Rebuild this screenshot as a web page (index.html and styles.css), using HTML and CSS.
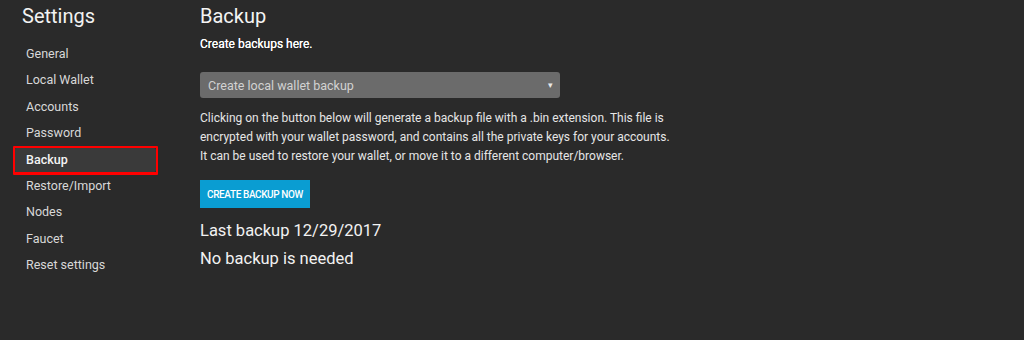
FILE: index.html
```html
<!DOCTYPE html>
<html>
<head>
<meta charset="utf-8">
<link rel="stylesheet" href="styles.css">
</head>
<body>
<div class="app">
  <aside class="sidebar">
    <h1 class="side-title">Settings</h1>
    <nav class="nav">
      <a class="nav-item">General</a>
      <a class="nav-item">Local Wallet</a>
      <a class="nav-item">Accounts</a>
      <a class="nav-item">Password</a>
      <a class="nav-item active">Backup<span class="mark"></span></a>
      <a class="nav-item">Restore/Import</a>
      <a class="nav-item">Nodes</a>
      <a class="nav-item">Faucet</a>
      <a class="nav-item">Reset settings</a>
    </nav>
  </aside>
  <main class="main">
    <h2 class="title">Backup</h2>
    <p class="sub">Create backups here.</p>
    <div class="select">
      <span>Create local wallet backup</span>
      <span class="arrow">▾</span>
    </div>
    <p class="desc">Clicking on the button below will generate a backup file with a .bin extension. This file is encrypted with your wallet password, and contains all the private keys for your accounts. It can be used to restore your wallet, or move it to a different computer/browser.</p>
    <button class="btn">CREATE BACKUP NOW</button>
    <div class="status status-first">Last backup 12/29/2017</div>
    <div class="status">No backup is needed</div>
  </main>
</div>
</body>
</html>
```
FILE: styles.css
```css
html, body {
  margin: 0;
  padding: 0;
  background: #2a2a2a;
  height: 340px;
  overflow: hidden;
}
body {
  font-family: Roboto, "Liberation Sans", sans-serif;
  color: #ececec;
}
.app {
  display: flex;
  height: 340px;
}
.sidebar {
  width: 186px;
  padding-left: 14px;
  flex-shrink: 0;
}
.side-title {
  margin: 0;
  padding: 4px 0 0 8px;
  font-size: 20px;
  font-weight: 400;
  line-height: 24px;
  color: #f2f2f2;
}
.nav {
  display: flex;
  flex-direction: column;
  margin-top: 14px;
  width: 142px;
}
.nav-item {
  position: relative;
  display: block;
  height: 24px;
  line-height: 24px;
  margin-bottom: 2.4px;
  padding-left: 12px;
  font-size: 12.5px;
  color: #d8d8d8;
  border-radius: 2px;
}
.nav-item.active {
  background: #3a3a3a;
  color: #f4f4f4;
  font-weight: 500;
}
.mark {
  position: absolute;
  left: -1px;
  right: -2px;
  top: -2px;
  bottom: -3px;
  border: 2px solid #ff0000;
  border-bottom-width: 3px;
  border-radius: 1px;
}
.main {
  flex: 1;
  padding-top: 4px;
}
.title {
  margin: 0;
  font-size: 20px;
  font-weight: 400;
  line-height: 24px;
  color: #f4f4f4;
}
.sub {
  margin: 9px 0 0;
  font-size: 12px;
  line-height: 14px;
  font-weight: 400;
  color: #ffffff;
  text-shadow: 0 0 0.3px #ffffff;
}
.select {
  margin-top: 21px;
  width: 360px;
  height: 26px;
  box-sizing: border-box;
  background: #6b6b6b;
  border-radius: 3px;
  display: flex;
  align-items: center;
  justify-content: space-between;
  padding: 0 7px 0 8px;
  font-size: 12.5px;
  color: #d2d2d2;
}
.arrow {
  font-size: 9px;
  color: #e8e8e8;
}
.desc {
  margin: 11px 0 0;
  width: 470px;
  font-size: 12px;
  line-height: 19px;
  color: #e6e6e6;
}
.btn {
  display: block;
  margin-top: 14px;
  width: 110px;
  height: 28px;
  border: none;
  border-radius: 0;
  background: #0a9dd2;
  color: #ffffff;
  font-family: Roboto, "Liberation Sans", sans-serif;
  font-size: 10px;
  font-weight: 500;
  letter-spacing: -0.4px;
  padding: 0;
}
.status {
  font-size: 16.5px;
  line-height: 28px;
  color: #f2f2f2;
}
.status-first {
  margin-top: 9px;
}
```
